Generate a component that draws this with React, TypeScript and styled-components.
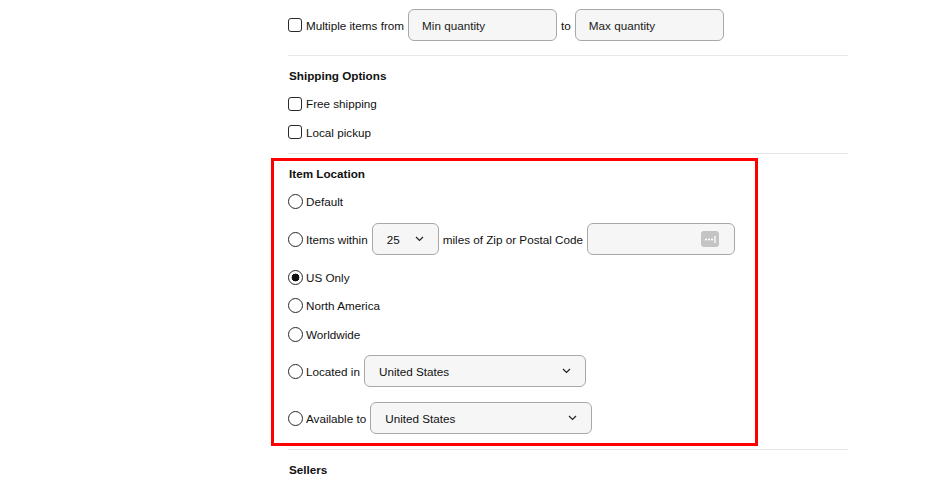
import React, { useState } from "react";
import styled, { createGlobalStyle } from "styled-components";

const GlobalStyle = createGlobalStyle`
  html, body {
    margin: 0;
    padding: 0;
    background: #ffffff;
  }
  body {
    font-family: "Liberation Sans", Arial, sans-serif;
    font-size: 11.7px;
    color: #111;
  }
`;

const Page = styled.div`
  width: 560px;
  margin-left: 288px;
  padding-top: 9px;
`;

const Separator = styled.div<{ top?: number; bottom?: number }>`
  height: 1px;
  background: #e8e8e8;
  margin-top: ${(p) => p.top ?? 0}px;
  margin-bottom: ${(p) => p.bottom ?? 0}px;
`;

const Heading = styled.div<{ h?: number }>`
  height: ${(p) => p.h ?? 28}px;
  display: flex;
  align-items: center;
  padding-left: 1px;
  font-weight: 700;
  font-size: 11.7px;
`;

const Row = styled.label<{ h?: number }>`
  display: flex;
  align-items: center;
  gap: 4px;
  height: ${(p) => p.h ?? 28}px;
  cursor: pointer;
`;

const ControlRow = styled.div<{ pt: number; pb: number }>`
  display: flex;
  align-items: center;
  gap: 4px;
  padding-top: ${(p) => p.pt}px;
  padding-bottom: ${(p) => p.pb}px;
`;

const Check = styled.input.attrs({ type: "checkbox" })`
  appearance: none;
  margin: 0;
  width: 14px;
  height: 14px;
  border: 1px solid #2a2a2a;
  border-radius: 3px;
  background: #fff;
  box-sizing: border-box;
  flex: none;
`;

const Radio = styled.input.attrs({ type: "radio" })`
  appearance: none;
  margin: 0 -1px 0 0;
  width: 15px;
  height: 15px;
  border: 1px solid #2a2a2a;
  border-radius: 50%;
  background: #fff;
  box-sizing: border-box;
  flex: none;
  &:checked {
    background: radial-gradient(circle, #111 0 3.6px, #fff 4.2px);
  }
`;

const TextInput = styled.input<{ w: number }>`
  width: ${(p) => p.w}px;
  height: 32px;
  box-sizing: border-box;
  border: 1px solid #a8a8a8;
  border-radius: 6px;
  background: #f6f6f6;
  padding: 0 13px;
  font-family: inherit;
  font-size: 11.7px;
  color: #111;
  outline: none;
  &::placeholder {
    color: #1a1a1a;
  }
`;

const ZipWrap = styled.div`
  position: relative;
  display: flex;
`;

const ZipIcon = styled.svg`
  position: absolute;
  right: 16px;
  top: 8px;
`;

const SelectBox = styled.button<{ w: number }>`
  width: ${(p) => p.w}px;
  height: 32px;
  box-sizing: border-box;
  border: 1px solid #a8a8a8;
  border-radius: 6px;
  background: #f6f6f6;
  padding: 0 14px 0 14px;
  display: flex;
  align-items: center;
  justify-content: space-between;
  font-family: inherit;
  font-size: 11.7px;
  color: #111;
  cursor: pointer;
`;

const Highlight = styled.div`
  box-sizing: border-box;
  width: 487px;
  margin-left: -17px;
  padding-left: 14px;
  border: 3px solid #ff0000;
`;

const Chevron = () => (
  <svg width="9" height="6" viewBox="0 0 9 6">
    <path d="M1 1 L4.5 4.5 L8 1" fill="none" stroke="#222" strokeWidth="1.2" />
  </svg>
);

const Select = ({ value, w }: { value: string; w: number }) => (
  <SelectBox w={w} type="button">
    <span>{value}</span>
    <Chevron />
  </SelectBox>
);

const locations = ["Default", "Items within", "US Only", "North America", "Worldwide", "Located in", "Available to"];

export default function App() {
  const [loc, setLoc] = useState("US Only");

  const radio = (name: string) => (
    <Radio name="loc" checked={loc === name} onChange={() => setLoc(name)} />
  );

  return (
    <>
      <GlobalStyle />
      <Page>
        <ControlRow pt={0} pb={0}>
          <Check />
          <span>Multiple items from</span>
          <TextInput w={149} placeholder="Min quantity" />
          <span>to</span>
          <TextInput w={149} placeholder="Max quantity" />
        </ControlRow>
        <Separator top={14} bottom={5} />

        <Heading>Shipping Options</Heading>
        <Row h={29}>
          <Check />
          Free shipping
        </Row>
        <Row>
          <Check />
          Local pickup
        </Row>
        <Separator top={7} bottom={4} />

        <Highlight>
          <Heading h={24}>Item Location</Heading>
          <Row style={{ marginTop: 2 }}>
            {radio(locations[0])}
            Default
          </Row>
          <ControlRow pt={8} pb={8}>
            {radio(locations[1])}
            <span>Items within</span>
            <Select value="25" w={67} />
            <span>miles of Zip or Postal Code</span>
            <ZipWrap>
              <TextInput w={148} />
              <ZipIcon width="18" height="16" viewBox="0 0 18 16">
                <rect x="0" y="0" width="18" height="16" rx="3" fill="#c4c4c4" />
                <circle cx="5" cy="8.5" r="1.1" fill="#fff" />
                <circle cx="8" cy="8.5" r="1.1" fill="#fff" />
                <circle cx="11" cy="8.5" r="1.1" fill="#fff" />
                <rect x="13.3" y="5" width="1.3" height="7" fill="#fff" />
              </ZipIcon>
            </ZipWrap>
          </ControlRow>
          <Row h={28.5}>
            {radio(locations[2])}
            US Only
          </Row>
          <Row h={28.5}>
            {radio(locations[3])}
            North America
          </Row>
          <Row h={28.5}>
            {radio(locations[4])}
            Worldwide
          </Row>
          <ControlRow pt={6.5} pb={7.5}>
            {radio(locations[5])}
            <span>Located in</span>
            <Select value="United States" w={222} />
          </ControlRow>
          <ControlRow pt={7.5} pb={9}>
            {radio(locations[6])}
            <span>Available to</span>
            <Select value="United States" w={222} />
          </ControlRow>
        </Highlight>
        <Separator top={3} bottom={5} />
        <Heading>Sellers</Heading>
      </Page>
    </>
  );
}
